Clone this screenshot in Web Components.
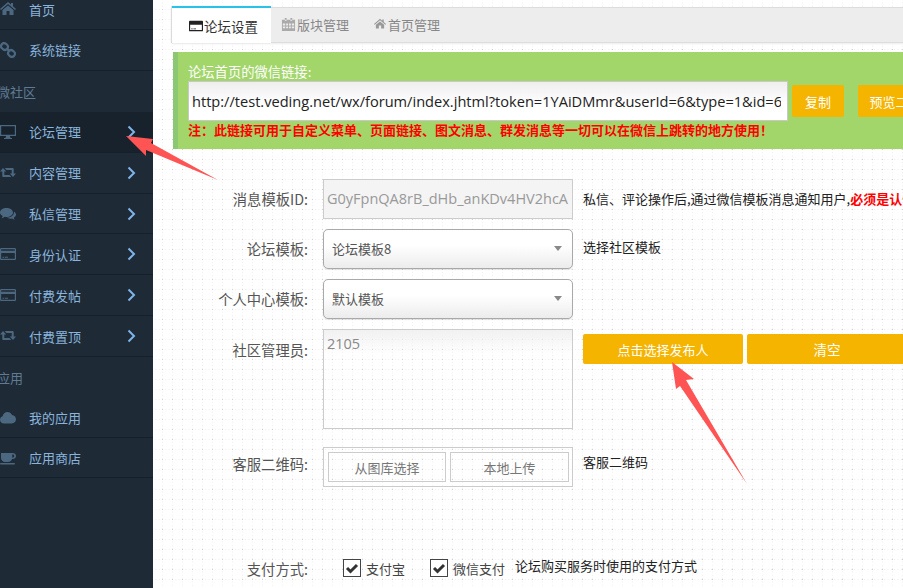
<!DOCTYPE html>
<html lang="zh">
<head>
<meta charset="utf-8">
<style>
  html, body { margin: 0; height: 100%; overflow: hidden; }
  body { font-family: "Noto Sans CJK SC", "Noto Sans", sans-serif; }
</style>
</head>
<body>
<forum-page>
  <side-bar slot="side">
    <side-item icon="home" label="首页"></side-item>
    <side-item icon="link" label="系统链接"></side-item>
    <side-title>微社区</side-title>
    <side-item icon="desktop" label="论坛管理" arrow active></side-item>
    <side-item icon="retweet" label="内容管理" arrow></side-item>
    <side-item icon="comments" label="私信管理" arrow></side-item>
    <side-item icon="card" label="身份认证" arrow></side-item>
    <side-item icon="card" label="付费发帖" arrow></side-item>
    <side-item icon="retweet" label="付费置顶" arrow></side-item>
    <side-title>应用</side-title>
    <side-item icon="cloud" label="我的应用" short></side-item>
    <side-item icon="coffee" label="应用商店" short></side-item>
  </side-bar>

  <tab-bar></tab-bar>
  <link-box></link-box>

  <form-row label="消息模板ID:" style="margin-top:30px;height:40px;--hint-top:10px">
    <div class="readonly">G0yFpnQA8rB_dHb_anKDv4HV2hcA</div>
    <span slot="hint">私信、评论操作后,通过微信模板消息通知用户,<b style="color:#f00">必须是认证服务号</b></span>
  </form-row>
  <form-row label="论坛模板:" style="margin-top:10px;height:40px;--hint-top:8px">
    <fake-select>论坛模板8</fake-select>
    <span slot="hint">选择社区模板</span>
  </form-row>
  <form-row label="个人中心模板:" style="margin-top:10px;height:40px">
    <fake-select>默认模板</fake-select>
  </form-row>
  <form-row label="社区管理员:" style="margin-top:10px;height:100px;--label-top:10px;--hint-top:0px">
    <fake-area>2105</fake-area>
    <span slot="hint" class="btns">
      <amber-btn style="width:160px">点击选择发布人</amber-btn>
      <amber-btn style="width:160px;font-size:13.500px">清空</amber-btn>
    </span>
  </form-row>
  <form-row label="客服二维码:" style="margin-top:18px;height:40px;--label-top:6px;--hint-top:5px">
    <upload-box></upload-box>
    <span slot="hint">客服二维码</span>
  </form-row>
  <pay-row style="margin-top:71px"></pay-row>

  <svg slot="over" class="arrows" width="903" height="588" viewBox="0 0 903 588">
    <path fill="#ff5454" d="M126 136L153 139 151 143 218 180 146 150 146 156Z"/>
    <path fill="#ff5454" d="M672 362L694 379 686 380 747 484 680 386 676 389Z"/>
  </svg>
</forum-page>

<script>
// fontawesome-ish icon set, drawn by hand
const ICONS = {
  home: '<path d="M8 1 0 8l1 1 7-6 7 6 1-1-3-2.700V2h-2v1.600z"/><path d="M8 4.500 2.500 9v5h4v-4h3v4h4V9z"/>',
  link: '<g fill="none" stroke="currentColor" stroke-width="2.200"><rect x="1" y="1.500" width="7" height="6" rx="3" transform="rotate(40 4.500 4.500)"/><rect x="8" y="8.500" width="7" height="6" rx="3" transform="rotate(40 11.500 11.500)"/></g><rect x="6.500" y="6.500" width="3.500" height="2.400" transform="rotate(40 8 8)"/>',
  desktop: '<path fill-rule="evenodd" d="M0 1h16v11H10l.5 2h1.500v1H4v-1h1.500L6 12H0zM1.200 2.200V10.800H14.800V2.200z"/>',
  retweet: '<path d="M3 3 6.200 6.500H4.300V10H9.500L11.300 12H3.500C2.800 12 2.300 11.500 2.300 10.900V6.500H0zM4.700 3H12.500C13.200 3 13.700 3.500 13.700 4.100V8.500H16L13 12 9.800 8.500H11.700V5H6.500z"/>',
  comments: '<path d="M6.500 2C10 2 13 4 13 6.500S10 11 6.500 11C5.800 11 5.200 10.900 4.600 10.800 3.800 11.500 2.800 12 1.500 12.200 2.200 11.400 2.600 10.600 2.700 9.900 1 9.100 0 7.900 0 6.500 0 4 2.900 2 6.500 2z"/><path d="M14 5.500C15.200 6.300 16 7.400 16 8.600 16 9.900 15.100 11 13.800 11.700 13.900 12.500 14.300 13.200 14.900 13.800 13.800 13.700 12.800 13.200 12 12.500 11.500 12.600 11 12.700 10.500 12.700 9 12.700 7.700 12.300 6.700 11.600 10.900 11.600 14.300 9.400 14 5.500z"/>',
  card: '<path fill-rule="evenodd" d="M1.300 2H14.700C15.400 2 16 2.600 16 3.300V12.700C16 13.400 15.400 14 14.700 14H1.300C.6 14 0 13.400 0 12.700V3.300C0 2.600.6 2 1.300 2zM1.200 7V12.400C1.200 12.700 1.300 12.800 1.600 12.800H14.400C14.700 12.800 14.800 12.700 14.800 12.400V7zM1.200 3.300V4.800H14.800V3.300z"/><path d="M2.500 10.800H4.300V11.800H2.500zM5 10.800H8V11.800H5z"/>',
  cardfill: '<path fill-rule="evenodd" d="M1 2H15C15.600 2 16 2.400 16 3V13C16 13.600 15.600 14 15 14H1C.4 14 0 13.600 0 13V3C0 2.400.4 2 1 2zM1.300 6.500V12.700H14.700V6.500z"/><path d="M2.500 10.800H4.300V11.800H2.500zM5 10.800H8V11.800H5z"/>',
  cloud: '<path d="M4 13.500C1.800 13.500 0 11.900 0 9.800 0 8.100 1.100 6.700 2.700 6.200 3 3.800 5 2 7.500 2 9.500 2 11.200 3.200 12 5 14.300 5.200 16 7 16 9.300 16 11.600 14.100 13.500 11.800 13.500z"/>',
  coffee: '<path fill-rule="evenodd" d="M1 3H12.500C14.500 3 16 4.300 16 6S14.500 9 12.500 9H12C11.500 10.800 10 12 8 12H5C2.800 12 1 10.200 1 8zM12.200 4.500V7.500H12.700C13.600 7.500 14.200 6.800 14.200 6S13.600 4.500 12.700 4.500z"/><rect y="13" width="15" height="1.500" rx=".7"/>',
  cal: '<path fill-rule="evenodd" d="M1 3H15V15H1zM2 7V9H4.500V7zM5.500 7V9H7.500V7zM8.500 7V9H10.500V7zM11.500 7V9H14V7zM2 10V12H4.500V10zM5.500 10V12H7.500V10zM8.500 10V12H10.500V10zM11.500 10V12H14V10zM4 1H6V4H4zM10 1H12V4H10z"/>'
};
const icon = (name, size) => `<svg width="${size}" height="${size}" viewBox="0 0 16 16" fill="currentColor" aria-hidden="true">${ICONS[name]}</svg>`;

class ForumPage extends HTMLElement {
  connectedCallback() {
    this.attachShadow({ mode: "open" }).innerHTML = `
<style>
  :host { display: flex; width: 903px; height: 588px; position: relative; overflow: hidden; }
  .side { width: 153px; flex: none; }
  .main {
    flex: 1; min-width: 0; padding: 7px 0 0 19px; overflow: hidden;
    background-color: #fff;
    background-image:
      radial-gradient(circle at .5px .5px, #d2d2d2 .6px, transparent .8px),
      radial-gradient(circle at .5px .5px, #eee .6px, transparent .8px),
      radial-gradient(circle at .5px .5px, #eee .6px, transparent .8px);
    background-size: 10px 10px, 10px 3.333px, 3.333px 10px;
    background-position: 9px 9px, 9px 9px, 9px 9px;
  }
  ::slotted(.arrows) { position: absolute; left: 0; top: 0; pointer-events: none; }
</style>
<div class="side"><slot name="side"></slot></div>
<div class="main"><slot></slot></div>
<slot name="over"></slot>`;
  }
}

class SideBar extends HTMLElement {
  connectedCallback() {
    this.attachShadow({ mode: "open" }).innerHTML = `
<style>
  :host { display: block; height: 588px; background: #1e2a36; overflow: hidden; }
  .list { margin: -10.900px 0 0 -2px; }
</style>
<div class="list"><slot></slot></div>`;
  }
}

class SideItem extends HTMLElement {
  connectedCallback() {
    const active = this.hasAttribute("active");
    const arrow = this.hasAttribute("arrow");
    const h = this.hasAttribute("short") ? 39 : 39.9;
    this.attachShadow({ mode: "open" }).innerHTML = `
<style>
  :host { display: block; }
  .row {
    display: flex; align-items: center; height: ${h}px; padding-left: 2px;
    border-bottom: 1px solid #16202a;
    background: ${active ? "#17222c" : "transparent"};
    color: #8ab4dc; font-size: 13px;
  }
  .ic { width: 29px; height: 16px; flex: none; color: #4c6880; }
  .lb { flex: 1; }
  .chev { margin-right: 17px; display: block; }
</style>
<div class="row">
  <span class="ic">${icon(this.getAttribute("icon"), 16)}</span>
  <span class="lb">${this.getAttribute("label")}</span>
  ${arrow ? '<svg class="chev" width="9" height="14" viewBox="0 0 9 14"><path d="M1.500 1.500 7 7l-5.500 5.500" fill="none" stroke="#7fb4ea" stroke-width="2"/></svg>' : ""}
</div>`;
  }
}

class SideTitle extends HTMLElement {
  connectedCallback() {
    this.attachShadow({ mode: "open" }).innerHTML = `
<style>
  :host { display: flex; align-items: center; height: 40.900px; margin-left: -1px; color: #5f7b94; font-size: 13px; }
</style>
<slot></slot>`;
  }
}

class TabBar extends HTMLElement {
  connectedCallback() {
    this.attachShadow({ mode: "open" }).innerHTML = `
<style>
  :host { display: flex; height: 36px; box-sizing: border-box; background: #ededed; border-top: 1px solid #ddd; border-bottom: 1px solid #ddd;
    box-shadow: 0 1px 2px rgba(0,0,0,.08); font-size: 13px; color: #888; }
  .tab { display: flex; align-items: center; padding: 0 10px 2px; }
  .tab svg { margin-right: 1px; color: #aaa; }
  .on { width: 99px; box-sizing: border-box; padding: 0 0 0 17px; background: #fff; color: #333; border-top: 2px solid #2ac2ea;
    margin-top: -2px; height: 37px; box-shadow: -1px 0 1px rgba(0,0,0,.12); font-size: 13.500px; }
  .on svg { color: #222; }
  .hm svg { color: #999; }
</style>
<div class="tab on">${icon("cardfill", 14)}论坛设置</div>
<div class="tab">${icon("cal", 15)}版块管理</div>
<div class="tab hm" style="margin-left:5px">${icon("home", 12)}<span style="margin-left:1px">首页管理</span></div>`;
  }
}

class AmberBtn extends HTMLElement {
  connectedCallback() {
    this.attachShadow({ mode: "open" }).innerHTML = `
<style>
  :host { display: inline-flex; align-items: center; justify-content: center; flex: none; height: 30px;
    background: #f5b400; color: #fff; font-size: 13px; border-radius: 2px; white-space: nowrap; }
</style>
<slot></slot>`;
  }
}

class LinkBox extends HTMLElement {
  connectedCallback() {
    this.attachShadow({ mode: "open" }).innerHTML = `
<style>
  :host { display: block; margin: 9px 0 0 1px; height: 97px; box-sizing: border-box; padding: 10px 0 0 10px;
    background: #a2d56a; border-left: 5px solid #8cc774; overflow: hidden; }
  .cap { color: #fff; font-size: 13.300px; line-height: 19px; }
  .line { display: flex; align-items: center; width: 800px; }
  .url { width: 600px; height: 40px; box-sizing: border-box; flex: none; padding: 0 6px 0 3px; border: 1px solid #c8c8c8;
    background: linear-gradient(#eee, #fff 60%); }
  .url div { overflow: hidden; color: #222; font: 14.600px/38px "Open Sans", "Noto Sans", sans-serif; white-space: nowrap; }
  .note { color: #f00; font-size: 13px; font-weight: 700; line-height: 18px; white-space: nowrap; }
</style>
<div class="cap">论坛首页的微信链接:</div>
<div class="line">
  <div class="url"><div>http://test.veding.net/wx/forum/index.jhtml?token=1YAiDMmr&amp;userId=6&amp;type=1&amp;id=6</div></div>
  <amber-btn style="width:52px;margin-left:4px;height:32px">复制</amber-btn>
  <amber-btn style="width:88px;margin-left:14px;height:32px">预览二维码</amber-btn>
</div>
<div class="note">注：此链接可用于自定义菜单、页面链接、图文消息、群发消息等一切可以在微信上跳转的地方使用！</div>`;
  }
}

class FormRow extends HTMLElement {
  connectedCallback() {
    this.attachShadow({ mode: "open" }).innerHTML = `
<style>
  :host { display: flex; align-items: flex-start; white-space: nowrap; }
  .lb { width: 136px; flex: none; text-align: right; font-size: 14.300px; color: #555; margin-top: var(--label-top, 9px); }
  .ctl { width: 250px; height: 100%; flex: none; margin-left: 15px; }
  .hint { margin-left: 10px; font-size: 13px; color: #222; margin-top: var(--hint-top, 8px); }
  ::slotted(.readonly) { box-sizing: border-box; height: 100%; border: 1px solid #ccc; background: #f4f4f4; color: #999;
    font: 14.500px/38px "Open Sans", "Noto Sans", sans-serif; padding-left: 3px; overflow: hidden; }
  ::slotted(.btns) { display: flex; gap: 4px; margin-top: 5px; }
</style>
<div class="lb">${this.getAttribute("label")}</div>
<div class="ctl"><slot></slot></div>
<div class="hint"><slot name="hint"></slot></div>`;
  }
}

class FakeSelect extends HTMLElement {
  connectedCallback() {
    this.attachShadow({ mode: "open" }).innerHTML = `
<style>
  :host { display: flex; align-items: center; box-sizing: border-box; height: 100%; padding: 0 10px 2px 8px; border: 1px solid #a9a9a9; border-radius: 5px;
    background: linear-gradient(#fff 40%, #ececec); color: #555; font-size: 13px; box-shadow: 0 1px 1px rgba(0,0,0,.1); }
  .t { flex: 1; }
  .car { width: 0; height: 0; border: 4px solid transparent; border-top: 5px solid #888; border-bottom: 0; }
</style>
<span class="t"><slot></slot></span><span class="car"></span>`;
  }
}

class FakeArea extends HTMLElement {
  connectedCallback() {
    this.attachShadow({ mode: "open" }).innerHTML = `
<style>
  :host { display: block; box-sizing: border-box; height: 100%; padding: 3px 3px; border: 1px solid #ccc;
    background: linear-gradient(#f1f1f1, transparent 25%); color: #888; font: 14.500px/22px "Open Sans", "Noto Sans", sans-serif; }
</style>
<slot></slot>`;
  }
}

class UploadBox extends HTMLElement {
  connectedCallback() {
    this.attachShadow({ mode: "open" }).innerHTML = `
<style>
  :host { display: flex; gap: 4px; box-sizing: border-box; height: 100%; padding: 4px; border: 1px solid #ccc; }
  div { flex: none; box-sizing: border-box; height: 30px; display: flex; align-items: center; justify-content: center;
    border: 1px solid #ccc; color: #777; font-size: 13px; }
</style>
<div style="width:118px">从图库选择</div><div style="width:119px">本地上传</div>`;
  }
}

class PayRow extends HTMLElement {
  connectedCallback() {
    const box = `<svg width="18" height="18" viewBox="0 0 18 18"><rect x=".5" y=".5" width="17" height="17" fill="#fff" stroke="#444"/><path d="M4 9l3.500 3.500L14 6" fill="none" stroke="#333" stroke-width="3"/></svg>`;
    this.attachShadow({ mode: "open" }).innerHTML = `
<style>
  :host { display: flex; align-items: center; height: 20px; white-space: nowrap; font-size: 13px; color: #444; }
  .lb { width: 136px; text-align: right; font-size: 14.300px; color: #555; }
  .ck { display: flex; align-items: center; gap: 5px; }
  .t { color: #222; margin: -5px 0 0 10px; }
</style>
<div class="lb">支付方式:</div>
<div class="ck" style="margin-left:35px">${box}支付宝</div>
<div class="ck" style="margin-left:25px">${box}微信支付</div>
<div class="t">论坛购买服务时使用的支付方式</div>`;
  }
}

customElements.define("amber-btn", AmberBtn);
customElements.define("forum-page", ForumPage);
customElements.define("side-bar", SideBar);
customElements.define("side-item", SideItem);
customElements.define("side-title", SideTitle);
customElements.define("tab-bar", TabBar);
customElements.define("link-box", LinkBox);
customElements.define("form-row", FormRow);
customElements.define("fake-select", FakeSelect);
customElements.define("fake-area", FakeArea);
customElements.define("upload-box", UploadBox);
customElements.define("pay-row", PayRow);
</script>
</body>
</html>
